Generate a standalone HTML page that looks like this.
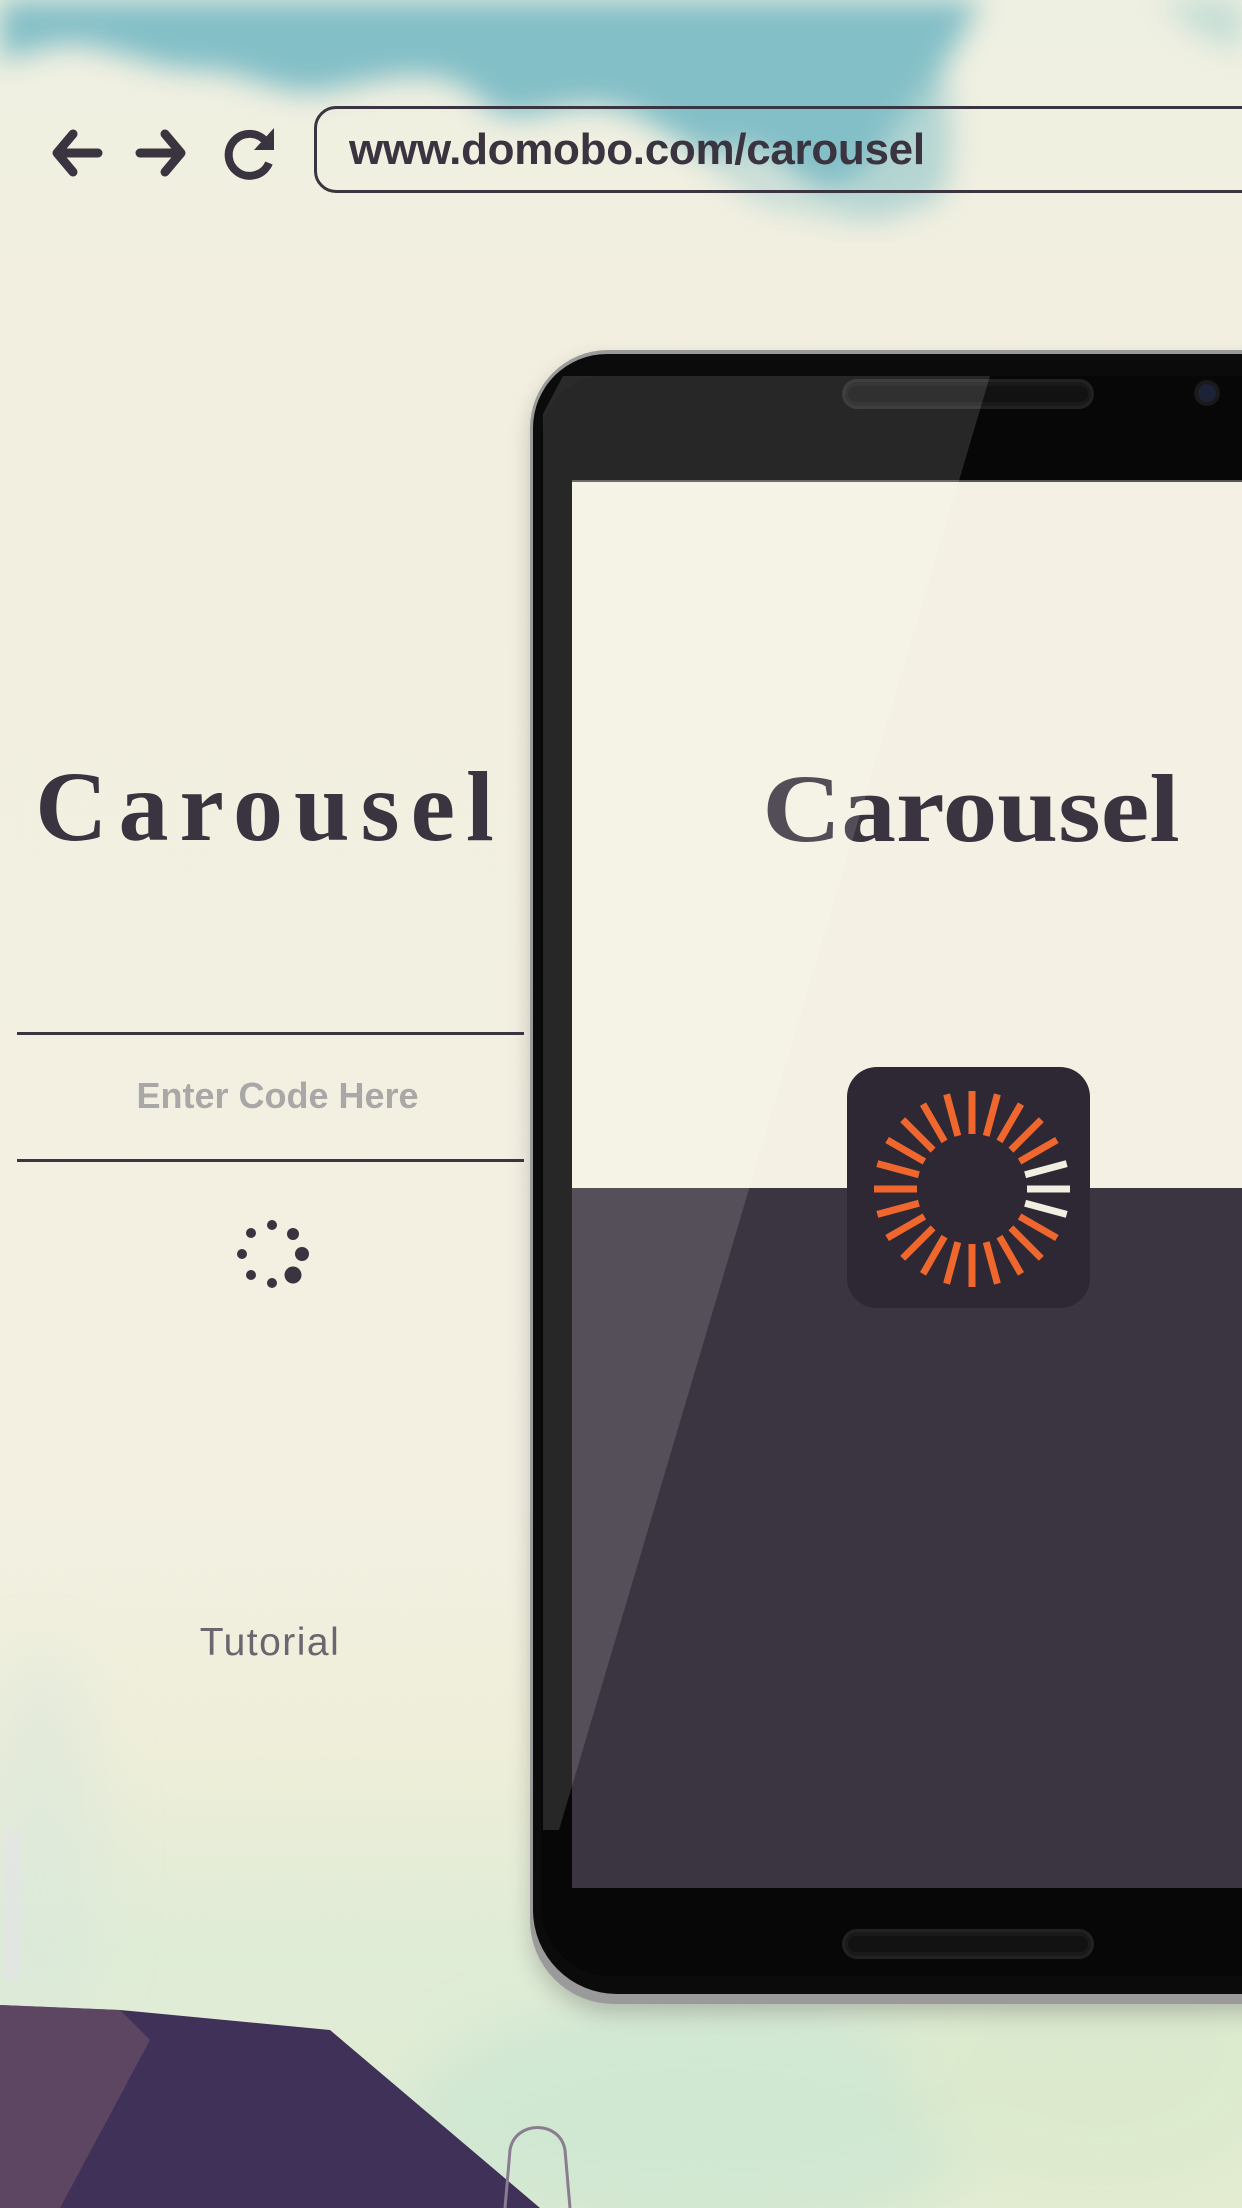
<!DOCTYPE html>
<html><head><meta charset="utf-8"><style>
*{margin:0;padding:0;box-sizing:border-box}
body{width:1242px;height:2208px;overflow:hidden;position:relative;font-family:"Liberation Sans",sans-serif;
background:linear-gradient(180deg,#eef0e2 0px,#f2efe0 300px,#f3f0e2 1500px,#eeeed9 1750px,#dfecd6 1950px,#e4ecd2 2208px);}
.abs{position:absolute}
</style></head><body>
<svg class="abs" style="left:0;top:0" width="1242" height="2208">
 <defs>
  <filter id="bl"><feGaussianBlur stdDeviation="14"/></filter>
  <filter id="bl2"><feGaussianBlur stdDeviation="30"/></filter>
 </defs>
 <g filter="url(#bl)" opacity="0.85">
  <path d="M0 0 H980 C960 40 940 80 900 120 C870 170 850 200 820 190 C790 180 760 140 720 150 C690 160 660 120 620 110 C560 90 520 140 480 100 C440 60 380 80 330 90 C280 100 250 70 200 70 C150 70 100 40 60 45 C30 50 10 60 0 60Z" fill="#6fb6c2"/>
  <path d="M640 110 C700 120 760 190 820 200 C860 210 870 160 900 120 L940 60 C950 100 960 150 940 200 L880 220 C840 220 800 210 760 200Z" fill="#7bbcc4" opacity="0.6"/>
  <path d="M1160 0 C1180 20 1200 40 1242 50 V0Z" fill="#8cc3c4" opacity="0.5"/>
 </g>
 <g filter="url(#bl2)" opacity="0.5">
  <ellipse cx="700" cy="2120" rx="300" ry="120" fill="#bfe3d0"/>
  <ellipse cx="1100" cy="2050" rx="200" ry="150" fill="#d7e8c8"/>
  <ellipse cx="40" cy="1850" rx="60" ry="200" fill="#d8e6dc"/>
 </g>
 <path d="M0 2005 L120 2010 L330 2030 L540 2208 L0 2208Z" fill="#3f3158"/>
 <path d="M0 2005 L120 2010 L150 2040 L60 2208 L0 2208Z" fill="#6b5067" opacity="0.7"/>
 <path d="M505 2208 L510 2150 C515 2120 560 2120 565 2150 L570 2208" fill="none" stroke="#8a7d90" stroke-width="3"/>
 <rect x="4" y="1830" width="18" height="150" fill="#e4e2e6" opacity="0.6"/>
</svg>

<svg class="abs" style="left:40px;top:118px" width="260" height="70" viewBox="40 118 260 70">
 <path d="M73 134 L57 153 L73 172" fill="none" stroke="#3a3340" stroke-width="9" stroke-linecap="round" stroke-linejoin="round"/>
 <line x1="59" y1="153" x2="98" y2="153" stroke="#3a3340" stroke-width="9" stroke-linecap="round"/>
 <path d="M165 134 L181 153 L165 172" fill="none" stroke="#3a3340" stroke-width="9" stroke-linecap="round" stroke-linejoin="round"/>
 <line x1="140" y1="153" x2="179" y2="153" stroke="#3a3340" stroke-width="9" stroke-linecap="round"/>
 <path d="M267 143 A21 21 0 1 0 269 163" fill="none" stroke="#3a3340" stroke-width="8"/>
 <path d="M274 128 L274 150 L254 150Z" fill="#3a3340"/>
</svg>
<div class="abs" style="left:314px;top:106px;width:1000px;height:87px;border:3px solid #3a3540;border-radius:22px;"></div>
<div class="abs" style="left:349px;top:124px;font-size:44px;font-weight:bold;color:#3a3340;letter-spacing:-0.3px;line-height:52px">www.domobo.com/carousel</div>

<div class="abs" style="left:30px;top:752px;width:480px;text-align:center;font-family:'Liberation Serif',serif;font-weight:bold;font-size:100px;letter-spacing:11px;color:#3a3340;line-height:110px;">Carousel</div>
<div class="abs" style="left:17px;top:1032px;width:507px;height:3px;background:#3a3540"></div>
<div class="abs" style="left:17px;top:1159px;width:507px;height:3px;background:#3a3540"></div>
<div class="abs" style="left:17px;top:1074px;width:521px;text-align:center;font-size:36px;font-weight:bold;color:#aaa8a7;line-height:44px">Enter Code Here</div>
<svg class="abs" style="left:220px;top:1200px" width="110" height="110" viewBox="220 1200 110 110">
 <circle cx="272" cy="1225" r="5" fill="#3a3340"/>
 <circle cx="293" cy="1234" r="6" fill="#3a3340"/>
 <circle cx="302" cy="1254" r="7" fill="#3a3340"/>
 <circle cx="293" cy="1275" r="8.5" fill="#3a3340"/>
 <circle cx="272" cy="1283" r="5" fill="#3a3340"/>
 <circle cx="251" cy="1275" r="5" fill="#3a3340"/>
 <circle cx="242" cy="1254" r="5" fill="#3a3340"/>
 <circle cx="251" cy="1233" r="5" fill="#3a3340"/>
</svg>
<div class="abs" style="left:150px;top:1620px;width:240px;text-align:center;font-size:39px;color:#6b6570;letter-spacing:1.5px;line-height:46px">Tutorial</div>

<div class="abs" style="left:530px;top:350px;width:800px;height:1654px;border-radius:78px 0 0 84px;background:#9a9a9a;box-shadow:0 10px 20px rgba(60,60,60,0.25)"></div>
<div class="abs" style="left:533px;top:354px;width:800px;height:1640px;border-radius:74px 0 0 84px;background:#0b0b0b;overflow:hidden">
 <div class="abs" style="left:8px;top:22px;width:800px;height:1600px;border-radius:64px 0 0 70px;background:#070707;"></div>
 <div class="abs" style="left:312px;top:28px;width:246px;height:24px;border-radius:12px;background:#1a1a1a;box-shadow:0 0 0 3px #222"></div>
 <div class="abs" style="left:315px;top:32px;width:240px;height:16px;border-radius:8px;background:#121212;"></div>
 <div class="abs" style="left:665px;top:30px;width:18px;height:18px;border-radius:50%;background:#1c2336;box-shadow:0 0 0 4px #1a1a1a"></div>
 <div class="abs" style="left:312px;top:1578px;width:246px;height:24px;border-radius:12px;background:#1a1a1a;box-shadow:0 0 0 3px #222"></div>
 <div class="abs" style="left:315px;top:1582px;width:240px;height:16px;border-radius:8px;background:#121212;"></div>
 <div class="abs" style="left:39px;top:126px;width:800px;height:708px;background:#f4f0e3;border-top:2px solid #555"></div>
 <div class="abs" style="left:39px;top:834px;width:800px;height:700px;background:#3b3541;"></div>
 <div class="abs" style="left:223px;top:400px;width:430px;text-align:center;font-family:'Liberation Serif',serif;font-weight:bold;font-size:96px;color:#3a3340;line-height:110px;transform:scaleX(1.14);">Carousel</div>
 <div class="abs" style="left:314px;top:713px;width:243px;height:241px;border-radius:30px;background:#2e2734"></div>
 <svg class="abs" style="left:314px;top:713px" width="243" height="241" viewBox="847 1067 243 241" id="rays"></svg>
 <div class="abs" style="left:0;top:0;width:800px;height:1640px;background:rgba(255,255,255,0.13);clip-path:polygon(30px 22px,457px 22px,26px 1476px,10px 1476px,10px 60px)"></div>
</div>
<script>
(function(){var s=document.getElementById('rays'),h='';for(var i=0;i<24;i++){var a=i*15*Math.PI/180,cx=972,cy=1189;var x1=cx+55*Math.cos(a),y1=cy+55*Math.sin(a),x2=cx+98*Math.cos(a),y2=cy+98*Math.sin(a);var c=(i==0||i==1||i==23)?'#f1eee2':'#f0672e';h+='<line x1="'+x1.toFixed(1)+'" y1="'+y1.toFixed(1)+'" x2="'+x2.toFixed(1)+'" y2="'+y2.toFixed(1)+'" stroke="'+c+'" stroke-width="7"/>';}s.innerHTML=h;})();
</script>
</body></html>
